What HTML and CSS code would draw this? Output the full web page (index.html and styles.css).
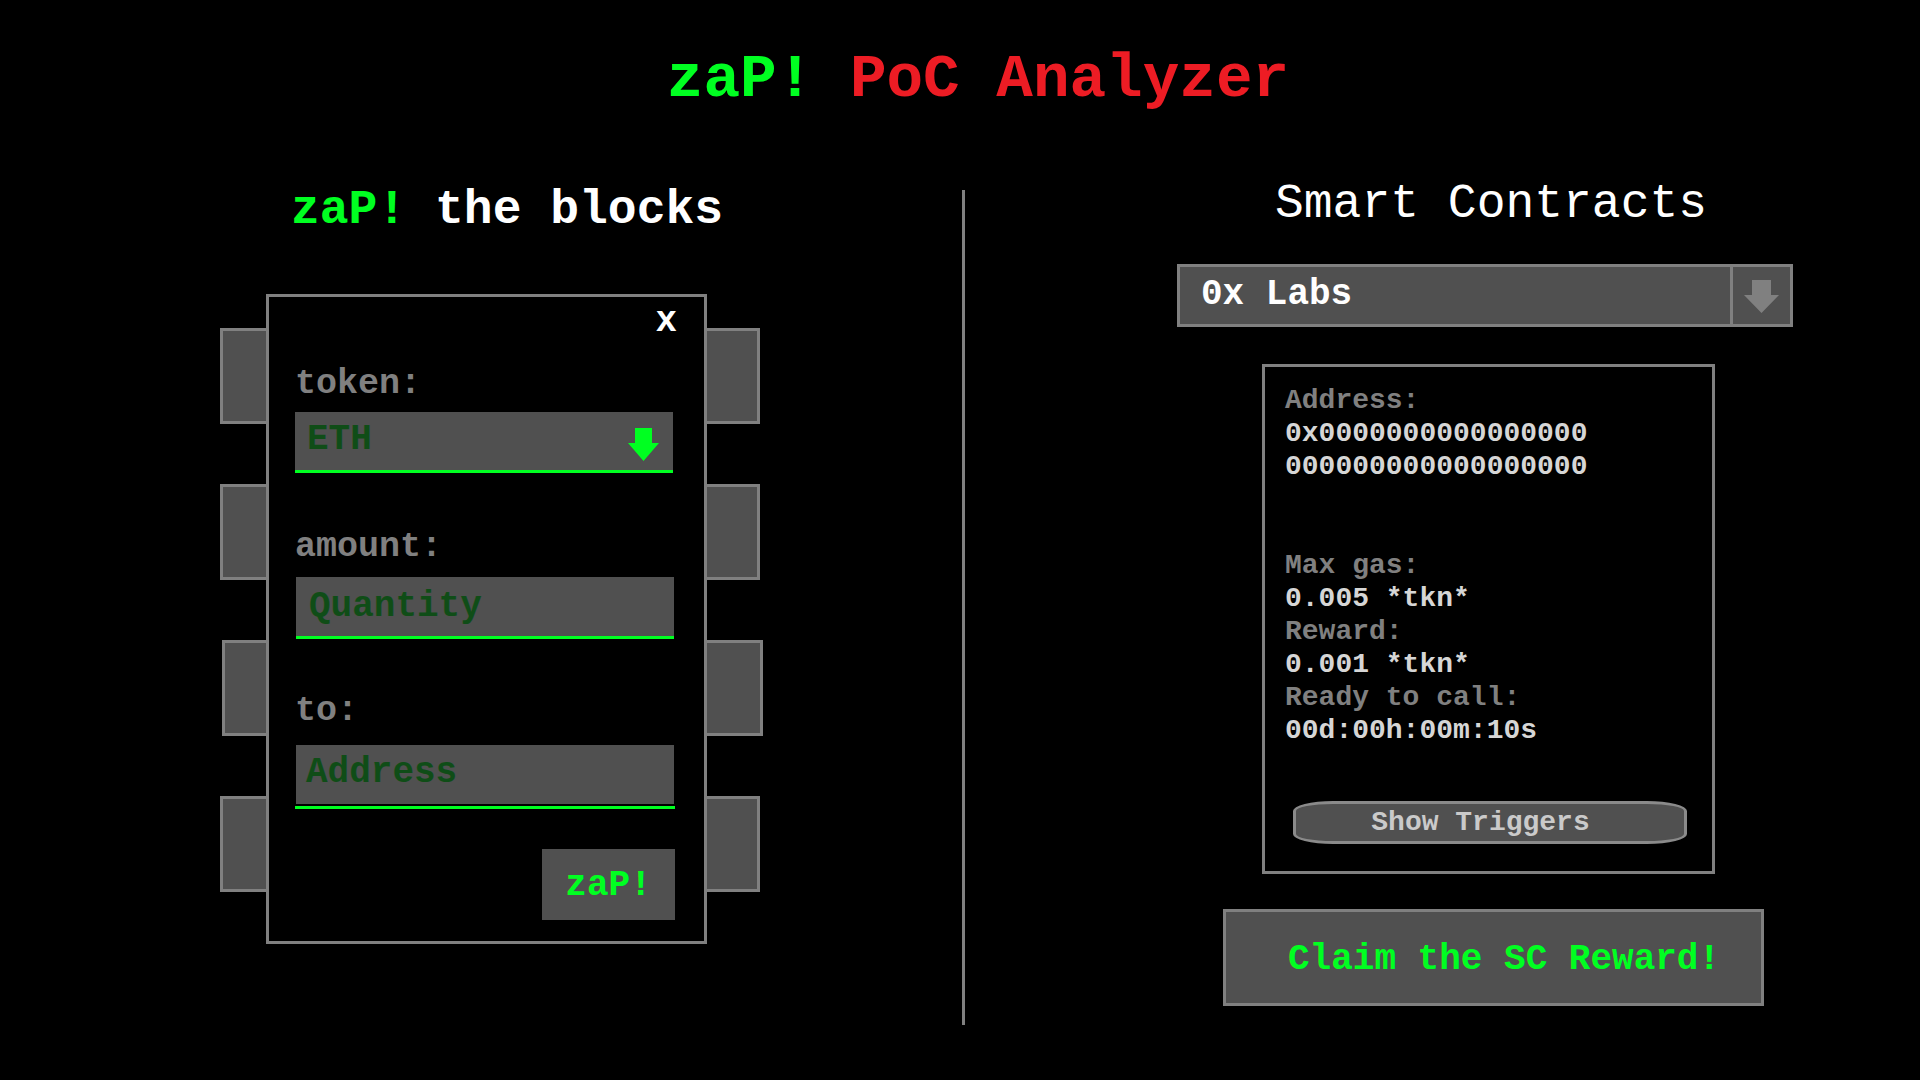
FILE: index.html
```html
<!DOCTYPE html>
<html lang="en">
<head>
<meta charset="utf-8">
<title>zaP! PoC Analyzer</title>
<link rel="stylesheet" href="styles.css">
</head>
<body>
<div class="page">
  <h1 class="title"><span class="green">zaP!</span> <span class="red">PoC Analyzer</span></h1>
  <div class="main">
    <section class="left">
      <h2 class="heading heading--left"><span class="green">zaP!</span> the blocks</h2>
      <div class="modal-wrap">
        <div class="tabs tabs--left">
          <div class="tab"></div>
          <div class="tab"></div>
          <div class="tab tab--shift"></div>
          <div class="tab"></div>
        </div>
        <div class="modal">
          <div class="close">x</div>
          <div class="label label--token">token:</div>
          <div class="field field--select">
            <span>ETH</span>
            <svg class="select-arrow" width="31" height="33" viewBox="0 0 31 33"><polygon points="7,0 24,0 24,15 31,15 15.5,33 0,15 7,15" fill="#00ff21"/></svg>
          </div>
          <div class="label label--amount">amount:</div>
          <div class="field field--qty">Quantity</div>
          <div class="label label--to">to:</div>
          <div class="field field--addr">Address</div>
          <div class="zap-btn">zaP!</div>
        </div>
        <div class="tabs tabs--right">
          <div class="tab"></div>
          <div class="tab"></div>
          <div class="tab tab--shift"></div>
          <div class="tab"></div>
        </div>
      </div>
    </section>
    <div class="divider"></div>
    <section class="right">
      <h2 class="heading heading--right">Smart Contracts</h2>
      <div class="dropdown">
        <div class="dropdown-text">0x Labs</div>
        <div class="dropdown-btn">
          <svg width="57" height="57" viewBox="0 0 57 57"><polygon points="19,13 38,13 38,28 46,28 28.5,46 11,28 19,28" fill="#808080"/></svg>
        </div>
      </div>
      <div class="card">
        <div class="card-line card-label">Address:</div>
        <div class="card-line card-value">0x0000000000000000</div>
        <div class="card-line card-value">000000000000000000</div>
        <div class="card-blank"></div>
        <div class="card-blank"></div>
        <div class="card-line card-label">Max gas:</div>
        <div class="card-line card-value">0.005 *tkn*</div>
        <div class="card-line card-label">Reward:</div>
        <div class="card-line card-value">0.001 *tkn*</div>
        <div class="card-line card-label">Ready to call:</div>
        <div class="card-line card-value">00d:00h:00m:10s</div>
        <div class="triggers">Show Triggers</div>
      </div>
      <div class="claim">Claim the SC Reward!</div>
    </section>
  </div>
</div>
</body>
</html>
```

FILE: styles.css
```css
html, body {
  margin: 0;
  padding: 0;
  background: #000;
}

body {
  font-family: "Courier New", "Nimbus Mono PS", "FreeMono", "Liberation Mono", monospace;
}

.page {
  width: 1920px;
  height: 1080px;
  overflow: hidden;
}

.green { color: #00ff21; }
.red { color: #ed1c24; }

.title {
  margin: 0;
  padding: 49px 0 0 36px;
  font-size: 61px;
  line-height: 61px;
  font-weight: bold;
  text-align: center;
  white-space: pre;
}

.main {
  display: flex;
  margin-top: 68px;
}

.left {
  width: 962px;
  display: flex;
  flex-direction: column;
  align-items: flex-start;
}

.heading {
  margin: 0;
  font-size: 48px;
  line-height: 48px;
  font-weight: bold;
  color: #fff;
  white-space: pre;
}

.heading--left {
  margin: 8px 0 0 291px;
}

.heading--right {
  margin: 2px 0 0 310px;
  font-weight: normal;
}

.modal-wrap {
  display: flex;
  margin: 60px 0 0 220px;
}

.tabs {
  display: flex;
  flex-direction: column;
  gap: 60px;
  padding-top: 34px;
}

.tab {
  height: 96px;
  box-sizing: border-box;
  background: #505050;
  border: 3px solid #808080;
}

.tabs--left .tab {
  width: 46px;
  border-right: none;
}

.tabs--left .tab--shift {
  width: 44px;
  margin-left: 2px;
}

.tabs--right .tab {
  width: 53px;
  border-left: none;
}

.tabs--right .tab--shift {
  width: 56px;
}

.modal {
  width: 441px;
  height: 650px;
  box-sizing: border-box;
  border: 3px solid #808080;
  padding: 7px 31px 0 26px;
  display: flex;
  flex-direction: column;
  align-items: flex-start;
}

.close {
  align-self: flex-end;
  margin-right: -4px;
  font-size: 36px;
  line-height: 36px;
  font-weight: bold;
  color: #fff;
}

.label {
  font-size: 35px;
  line-height: 35px;
  font-weight: bold;
  color: #808080;
  white-space: pre;
}

.label--token { margin-top: 27px; }
.label--amount { margin-top: 57px; }
.label--to { margin-top: 55px; }

.field {
  width: 378px;
  box-sizing: border-box;
  background: #505050;
  border-bottom: 3px solid #00ff21;
  font-size: 36px;
  line-height: 36px;
  font-weight: bold;
  color: #0f4d17;
}

.field--select {
  margin-top: 10px;
  height: 61px;
  padding: 10px 14px 0 12px;
  display: flex;
  justify-content: space-between;
  align-items: flex-start;
}

.select-arrow {
  margin-top: 6px;
}

.field--qty {
  margin: 12px 0 0 1px;
  height: 62px;
  padding: 12px 0 0 13px;
}

.field--addr {
  margin-top: 16px;
  width: 380px;
  height: 64px;
  padding: 10px 0 0 11px;
  background: linear-gradient(#505050, #505050) 1px 0 / 378px 59px no-repeat;
}

.zap-btn {
  align-self: flex-end;
  margin: 40px -2px 0 0;
  width: 133px;
  height: 71px;
  background: #505050;
  color: #00ff21;
  font-size: 36px;
  line-height: 73px;
  font-weight: bold;
  text-align: center;
}

.divider {
  width: 3px;
  height: 835px;
  margin-top: 12px;
  background: #808080;
}

.right {
  flex: 1;
  display: flex;
  flex-direction: column;
  align-items: flex-start;
}

.dropdown {
  margin: 36px 0 0 212px;
  width: 616px;
  height: 63px;
  box-sizing: border-box;
  border: 3px solid #808080;
  background: #505050;
  display: flex;
}

.dropdown-text {
  flex: 1;
  padding: 10px 0 0 21px;
  font-size: 36px;
  line-height: 36px;
  font-weight: bold;
  color: #fff;
  white-space: pre;
}

.dropdown-btn {
  width: 57px;
  border-left: 3px solid #808080;
  display: flex;
}

.card {
  margin: 37px 0 0 297px;
  width: 453px;
  height: 510px;
  box-sizing: border-box;
  border: 3px solid #808080;
  padding: 17px 0 0 20px;
  font-size: 28px;
  line-height: 33px;
  font-weight: bold;
}

.card-line { white-space: pre; }
.card-label { color: #808080; }
.card-value { color: #d6d6d6; }
.card-blank { height: 33px; }

.triggers {
  margin: 54px 0 0 8px;
  width: 394px;
  height: 43px;
  box-sizing: border-box;
  border: 3px solid #8a8a8a;
  border-radius: 40px / 10px;
  background: #505050;
  padding-right: 19px;
  color: #cacaca;
  font-size: 28px;
  line-height: 38px;
  text-align: center;
  white-space: pre;
}

.claim {
  margin: 35px 0 0 258px;
  width: 541px;
  height: 97px;
  box-sizing: border-box;
  border: 3px solid #808080;
  background: #505050;
  padding: 30px 0 0 62px;
  color: #00ff21;
  font-size: 36px;
  line-height: 36px;
  font-weight: bold;
  white-space: pre;
}
```
